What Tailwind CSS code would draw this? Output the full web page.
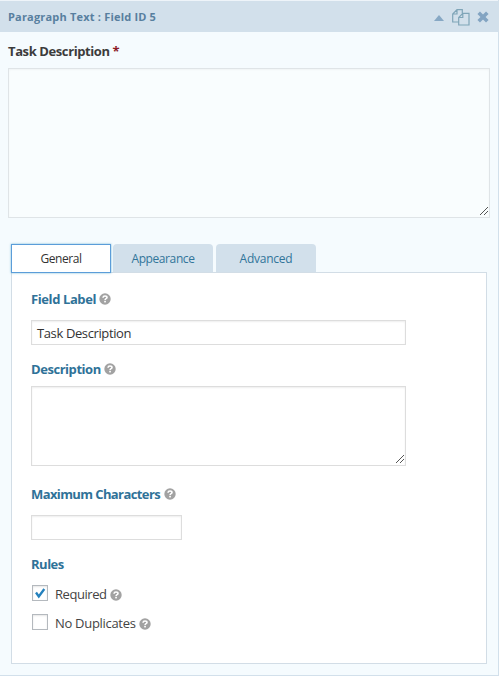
<!DOCTYPE html>
<html lang="en">
<head>
<meta charset="utf-8">
<title>Field settings</title>
<script src="https://cdn.jsdelivr.net/npm/@tailwindcss/browser@4"></script>
</head>
<body class="bg-[#f5fbfe] font-['Open_Sans','Noto_Sans',sans-serif] text-[13px] text-[#444]">
<svg class="hidden">
  <symbol id="help" viewBox="0 0 12 12"><circle cx="6" cy="6" r="5.700" fill="#a2a2a2"/><path d="M4 4.700C4.100 3.500 4.900 3 6 3s2 .6 2 1.500C8 5.700 6.100 5.600 6.100 7" fill="none" stroke="#fff" stroke-width="1.600"/><rect x="5.200" y="7.800" width="1.700" height="1.600" fill="#fff"/></symbol>
  <symbol id="grip" viewBox="0 0 9 9"><path d="M.5 8.500L8.500.5M4.500 8.500L8.500 4.500" stroke="#555" stroke-width="1" fill="none" shape-rendering="crispEdges"/></symbol>
</svg>
<div class="w-[499px] h-[676px] border-r border-b border-[#d2e0eb] flex flex-col">
  <header class="h-8 shrink-0 border-t border-[#eef4f9] bg-[#d2e0eb] flex items-center pl-2 pr-[9px]">
    <span class="grow text-[11px] font-bold text-[#587f9f] tracking-[0.19px] leading-4 whitespace-nowrap">Paragraph Text : Field ID 5</span>
    <svg class="w-[10px] h-[6px] mr-2 mt-[2px]" viewBox="0 0 10 6"><path d="M5 0L10 6H0z" fill="#87a8c4"/></svg>
    <svg class="w-[18px] h-[17px] mr-[7px] mt-[2px]" viewBox="0 0 18 17" fill="none" stroke="#7fa5b8" stroke-width="1.200"><path d="M6.700 13H.7V5L5 .7h5.300v3.600M5 .7V5H.7M10.800 4.300h6.200v11.700H6.700V8.500zM10.800 4.300v4.200H6.700"/></svg>
    <svg class="w-3 h-3 mt-px" viewBox="0 0 12 12"><path d="M1.700 1.700l8.600 8.600M10.300 1.700l-8.600 8.600" stroke="#83a4c2" stroke-width="3.600"/></svg>
  </header>
  <main class="pl-2 pr-2 flex flex-col">
    <h2 class="mt-[10px] h-[18px] leading-[18px] font-bold text-[#3c3c3c] tracking-[-0.4px]">Task Description <span class="text-[#8b1a25]">*</span></h2>
    <div class="mt-2 h-[150px] w-[482px] border border-[#dfe4e7] bg-[#f9fdfe] shadow-[inset_0_1px_2px_rgba(0,0,0,0.04)] flex justify-end items-end p-px"><svg class="size-[9px]"><use href="#grip"/></svg></div>
    <nav class="mt-[26px] ml-[3px] h-[28px] flex text-center leading-[29px] text-[12px] text-[#31759a]">
      <div class="z-10 w-[100px] h-[29px] border border-[#5b9dd9] bg-white text-[#333] leading-[27px] tracking-[-0.45px] shadow-[0_0_2px_rgba(30,140,190,0.6)]">General</div>
      <div class="w-[100px] ml-[2px] mr-[3px] rounded-t-[4px] bg-[#d2e0eb] tracking-[-0.4px]">Appearance</div>
      <div class="w-[100px] rounded-t-[4px] bg-[#d2e0eb] tracking-[-0.25px]">Advanced</div>
    </nav>
    <section class="ml-[3px] w-[476px] h-[392px] border border-[#d2dde6] bg-white pl-[19px] flex flex-col">
      <h3 class="mt-[17px] h-[18px] flex items-center gap-[3px] leading-[18px] font-bold text-[#2f7298] tracking-[-0.4px]"><span>Field Label</span><svg class="size-3"><use href="#help"/></svg></h3>
      <div class="mt-3 w-[375px] h-[25px] border border-[#ddd] shadow-[inset_0_1px_2px_rgba(0,0,0,0.07)] pl-[5px] leading-[25px] text-[#333] tracking-[-0.38px]"><span>Task Description</span></div>
      <h3 class="mt-[15px] h-[18px] flex items-center gap-[3px] leading-[18px] font-bold text-[#2f7298] tracking-[-0.45px]"><span>Description</span><svg class="size-3"><use href="#help"/></svg></h3>
      <div class="mt-2 w-[375px] h-[80px] border border-[#ddd] shadow-[inset_0_1px_2px_rgba(0,0,0,0.07)] flex justify-end items-end p-px"><svg class="size-[9px]"><use href="#grip"/></svg></div>
      <h3 class="mt-[19px] h-[18px] flex items-center gap-1 leading-[18px] font-bold text-[#2f7298] tracking-[-0.6px]"><span>Maximum Characters</span><svg class="size-3"><use href="#help"/></svg></h3>
      <div class="mt-3 w-[151px] h-[25px] border border-[#ddd] shadow-[inset_0_1px_2px_rgba(0,0,0,0.07)]"></div>
      <h3 class="mt-[15px] h-[18px] leading-[18px] font-bold text-[#2f7298] tracking-[-0.5px]"><span>Rules</span></h3>
      <div class="mt-[13px] ml-px h-[18px] flex items-center"><div class="size-4 border border-[#b4b9be] shadow-[inset_0_1px_2px_rgba(0,0,0,0.1)] -mt-[4px]"><svg class="size-[14px]" viewBox="0 0 14 14"><path d="M3 6.500l2.800 4L11.300 3" fill="none" stroke="#2481bd" stroke-width="2.300"/></svg></div><span class="ml-[7px] mr-[3px] tracking-[-0.45px]">Required</span><svg class="size-3"><use href="#help"/></svg></div>
      <div class="mt-[11px] ml-px h-[18px] flex items-center"><div class="size-4 border border-[#b4b9be] shadow-[inset_0_1px_2px_rgba(0,0,0,0.1)] -mt-[4px]"></div><span class="ml-[7px] mr-[3px] tracking-[-0.3px]">No Duplicates</span><svg class="size-3"><use href="#help"/></svg></div>
    </section>
  </main>
</div>
</body>
</html>
